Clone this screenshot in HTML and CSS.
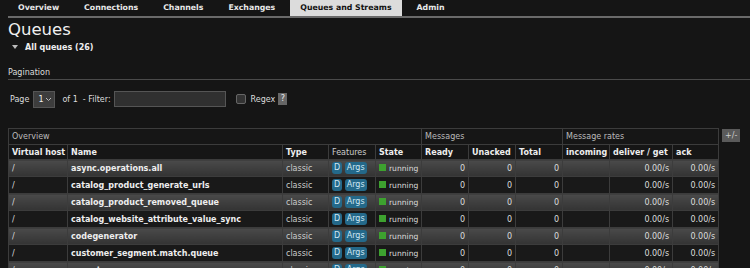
FILE: index.html
```html
<!DOCTYPE html>
<html>

<head>
    <title>Queues and Streams</title>
    <link rel="stylesheet" href="styles.css">
</head>

<body>
    <ul class="menu">
        <li><a>Overview</a></li>
        <li><a>Connections</a></li>
        <li><a>Channels</a></li>
        <li><a>Exchanges</a></li>
        <li class="selected"><a>Queues and Streams</a></li>
        <li><a>Admin</a></li>
    </ul>

    <div class="main">
        <h1 class="page-title">Queues</h1>
        <div class="section-toggle"><span class="arrow"></span>All queues (26)</div>

        <h3 class="section-title">Pagination</h3>
        <div class="pagination">
            <span>Page</span>
            <span class="page-select">1 <svg width="7" height="5" viewBox="0 0 7 5"><path d="M1 1 L3.5 3.5 L6 1" fill="none" stroke="#bbb" stroke-width="1"/></svg></span>
            <span>of 1</span>
            <span class="filter-label">- Filter:</span>
            <span class="filter-input"></span>
            <span class="checkbox"></span>
            <span>Regex</span>
            <span class="help">?</span>
        </div>

        <div class="table-wrap">
            <table class="list">
                <colgroup>
                    <col style="width: 59px">
                    <col style="width: 215px">
                    <col style="width: 46px">
                    <col style="width: 47px">
                    <col style="width: 46px">
                    <col style="width: 47px">
                    <col style="width: 47px">
                    <col style="width: 47px">
                    <col style="width: 47px">
                    <col style="width: 63px">
                    <col style="width: 46px">
                </colgroup>
                <thead>
                    <tr class="group-row">
                        <th colspan="5">Overview</th>
                        <th colspan="3">Messages</th>
                        <th colspan="3">Message rates</th>
                    </tr>
                    <tr class="col-row">
                        <th>Virtual host</th>
                        <th>Name</th>
                        <th>Type</th>
                        <th class="plain">Features</th>
                        <th>State</th>
                        <th>Ready</th>
                        <th>Unacked</th>
                        <th>Total</th>
                        <th>incoming</th>
                        <th>deliver / get</th>
                        <th>ack</th>
                    </tr>
                </thead>
                <tbody id="rows"></tbody>
            </table>
            <span class="toggle-btn">+/-</span>
        </div>
    </div>

    <script>
        var queues = [
            "async.operations.all",
            "catalog_product_generate_urls",
            "catalog_product_removed_queue",
            "catalog_website_attribute_value_sync",
            "codegenerator",
            "customer_segment.match.queue",
            "exports"
        ];
        var tbody = document.getElementById("rows");
        for (var i = 0; i < queues.length; i++) {
            var tr = document.createElement("tr");
            tr.className = i % 2 == 0 ? "alt1" : "alt2";
            tr.innerHTML =
                '<td>/</td>' +
                '<td class="name">' + queues[i] + '</td>' +
                '<td class="muted">classic</td>' +
                '<td><span class="badge">D</span> <span class="badge">Args</span></td>' +
                '<td class="state"><span class="state-dot"></span>running</td>' +
                '<td class="r">0</td><td class="r">0</td><td class="r">0</td>' +
                '<td></td>' +
                '<td class="r">0.00/s</td><td class="r">0.00/s</td>';
            tbody.appendChild(tr);
        }
    </script>
</body>

</html>
```

FILE: styles.css
```css
body {
    margin: 0;
    background: #151515;
    color: #ddd;
    font-family: "DejaVu Sans", Verdana, sans-serif;
    font-size: 8px;
}

.menu {
    display: flex;
    gap: 5px;
    list-style: none;
    margin: 0 0 0 8px;
    padding: 0;
    height: 16px;
    border-bottom: 2px solid #6a6a6a;
}

.menu li {
    padding: 0 10px;
    line-height: 16px;
    font-weight: bold;
    font-size: 7.8px;
    color: #e8e8e8;
}

.menu li.selected {
    background: #dcdcdc;
    color: #111;
}

.main {
    padding: 0 0 0 8px;
}

.page-title {
    margin: 2px 0 0 0;
    font-weight: normal;
    font-size: 16.5px;
    line-height: 20px;
    color: #f0f0f0;
}

.section-toggle {
    margin-top: 2px;
    font-weight: bold;
    font-size: 8px;
    line-height: 12px;
    color: #eee;
}

.arrow {
    display: inline-block;
    width: 0;
    height: 0;
    margin: 0 7px 1px 4px;
    border-left: 3px solid transparent;
    border-right: 3px solid transparent;
    border-top: 4px solid #bbb;
}

.section-title {
    margin: 13px 0 0 0;
    font-weight: normal;
    font-size: 8px;
    line-height: 12px;
    color: #ddd;
    border-bottom: 1px solid #4a4a4a;
}

.pagination {
    display: flex;
    align-items: center;
    margin-top: 10px;
    padding-left: 2px;
    height: 18px;
    font-size: 8px;
    color: #ddd;
}

.page-select {
    display: inline-flex;
    align-items: center;
    gap: 2px;
    margin: 0 7px 0 4px;
    padding: 0 2px 0 4px;
    height: 17px;
    background: #3d3d3d;
    border: 1px solid #555;
    box-sizing: border-box;
    color: #eee;
}

.filter-label {
    margin-left: 5px;
}

.filter-input {
    display: inline-block;
    width: 112px;
    height: 16px;
    margin: 0 10px 0 3px;
    background: #303030;
    border: 1px solid #555;
    box-sizing: border-box;
}

.checkbox {
    display: inline-block;
    width: 8px;
    height: 8px;
    margin-right: 5px;
    background: #333;
    border: 1px solid #666;
    border-radius: 2px;
}

.help {
    display: inline-block;
    margin-left: 3px;
    width: 9px;
    height: 12px;
    line-height: 12px;
    text-align: center;
    background: #666;
    color: #eee;
}

.table-wrap {
    display: flex;
    align-items: flex-start;
    gap: 3px;
    margin-top: 20px;
}

.list {
    width: 710px;
    table-layout: fixed;
    border-collapse: collapse;
    border: 1px solid #444;
    font-size: 8px;
}

.list th,
.list td {
    border: 1px solid #3c3c3c;
    padding: 0 3px;
    text-align: left;
    white-space: nowrap;
    overflow: hidden;
}

.group-row th {
    height: 15px;
    font-weight: normal;
    color: #bbb;
    background: #161616;
}

.col-row th {
    height: 14px;
    font-weight: bold;
    color: #eee;
    background: #161616;
}

.col-row th.plain {
    font-weight: normal;
    color: #ccc;
}

.list td {
    height: 16px;
    color: #ddd;
}

.list td.name {
    font-weight: bold;
    color: #eee;
}

.list td.muted {
    color: #ccc;
}

.list td.state {
    padding-right: 0;
    font-size: 7.6px;
}

.list td.r {
    text-align: right;
}

tr.alt1 td {
    background: linear-gradient(#4a4a4a, #333333);
}

tr.alt2 td {
    background: #191919;
}

.badge {
    display: inline-block;
    padding: 0 2px;
    line-height: 12px;
    border-radius: 3px;
    background: #24698a;
    color: #cfe6f3;
}

.state-dot {
    display: inline-block;
    width: 7px;
    height: 7px;
    margin-right: 3px;
    background: #3da12f;
}

.toggle-btn {
    display: inline-block;
    padding: 0 3px;
    height: 13px;
    line-height: 13px;
    margin-top: 1px;
    background: #5a5a5a;
    color: #ccc;
    font-size: 8px;
}
```
